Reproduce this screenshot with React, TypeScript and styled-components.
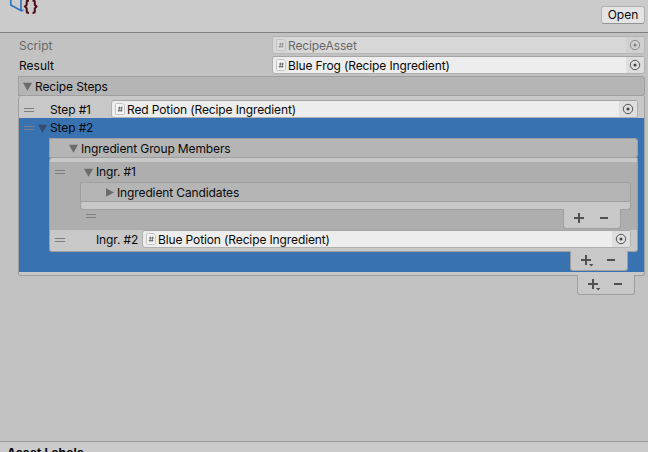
import React from "react";
import styled, { createGlobalStyle } from "styled-components";

const Global = createGlobalStyle`
  * { box-sizing: border-box; }
  body { margin: 0; overflow: hidden; background: #c2c2c2; }
`;

const Inspector = styled.main`
  width: 648px;
  height: 452px;
  overflow: hidden;
  display: flex;
  flex-direction: column;
  background: #c2c2c2;
  color: #090909;
  font: 12px/18px Inter, sans-serif;
  letter-spacing: -0.12px;
  white-space: nowrap;
`;

const Header = styled.header`
  height: 33px;
  flex: none;
  display: flex;
  justify-content: space-between;
  padding: 0 3px 0 8px;
  background: #cbcbcb;
  border-bottom: 1px solid #808080;
`;

const OpenButton = styled.button`
  width: 44px;
  height: 18px;
  margin-top: 6px;
  padding: 0;
  background: #e4e4e4;
  border: 1px solid #b0b0b0;
  border-bottom-color: #939393;
  border-radius: 3px;
  color: #090909;
  font: 12px/16px Inter, sans-serif;
`;

const Body = styled.section`
  flex: 1;
  padding: 3px 3px 0 18px;
`;

const Property = styled.div<{ $disabled?: boolean }>`
  display: flex;
  height: 18px;
  margin-bottom: 2px;
  opacity: ${(p) => (p.$disabled ? 0.5 : 1)};
`;

const PropertyLabel = styled.span`
  width: 254px;
  padding: 1px 0 0 1px;
  letter-spacing: 0;
`;

const Field = styled.div`
  flex: 1;
  height: 18px;
  display: flex;
  align-items: center;
  padding-left: 3px;
  background: #ededed;
  border: 1px solid #b0b0b0;
  border-top-color: #a4a4a4;
  border-radius: 3px;
  overflow: hidden;
`;

const FieldText = styled.span`
  flex: 1;
  margin-left: 1px;
  line-height: 16px;
  padding-top: 1px;
`;

const Picker = styled.span`
  width: 18px;
  height: 16px;
  display: grid;
  place-items: center;
  background: #dedede;
`;

const Foldout = styled.div<{ $indent: number }>`
  height: 20px;
  display: flex;
  align-items: center;
  padding-left: ${(p) => p.$indent}px;
  background: #b5b5b5;
  border: 1px solid #9f9f9f;
  border-radius: 0 3px 3px 0;
`;

const FoldoutText = styled.span`
  padding-top: 2px;
`;

const List = styled.div<{ $height: number; $pad: number }>`
  height: ${(p) => p.$height}px;
  padding-top: ${(p) => p.$pad}px;
  background: #c8c8c8;
  border: 1px solid #9f9f9f;
  border-top: 0;
  border-radius: 3px 0 3px 3px;
`;

const Row = styled.div<{ $height: number }>`
  height: ${(p) => p.$height}px;
  display: flex;
  padding: 0 6px 0 5px;
`;

const RowLabel = styled.span<{ $width: number; $indent: number }>`
  width: ${(p) => p.$width}px;
  padding: 1px 0 0 ${(p) => p.$indent}px;
`;

const Selected = styled.div`
  height: 154px;
  padding: 0 6px 0 30px;
  background: #3872b1;
`;

const ElementTitle = styled.div<{ $gap: number }>`
  height: 20px;
  display: flex;
  align-items: center;
  margin-left: -25px;

  & > svg { margin-left: ${(p) => p.$gap}px; }
`;

const Element = styled.div`
  height: 68px;
  padding: 0 6px 0 30px;
  background: #aeaeae;
`;

const Grip = styled.span<{ $top?: number; $left?: number }>`
  width: 10px;
  height: 4px;
  flex: none;
  margin: ${(p) => p.$top ?? 0}px 0 0 ${(p) => p.$left ?? 0}px;
  border: solid #808080;
  border-width: 1px 0;
`;

const ListEnd = styled.div<{ $grip?: boolean }>`
  display: flex;
  justify-content: ${(p) => (p.$grip ? "space-between" : "flex-end")};
  margin-top: -1px;
  padding-right: 10px;
`;

const FooterTab = styled.div`
  width: 58px;
  height: 20px;
  background: #c8c8c8;
  border: 1px solid #9f9f9f;
  border-top: 0;
  border-radius: 0 0 3px 3px;
`;

const AssetLabels = styled.footer`
  height: 11px;
  flex: none;
  padding: 2px 0 0 7px;
  background: #cbcbcb;
  border-top: 1px solid #999;
  font-weight: 700;
  letter-spacing: 0.14px;
`;

const ArrowSvg = styled.svg`
  flex: none;
  margin-right: 3px;
`;

const Arrow = ({ closed, fill = "#6b6b6b" }: { closed?: boolean; fill?: string }) => (
  <ArrowSvg width="9" height="9" viewBox="0 0 9 9">
    <path d={closed ? "M1 .2 9 4.5 1 8.8z" : "M0 .8h9L4.5 8.8z"} fill={fill} />
  </ArrowSvg>
);

const ScriptIcon = () => (
  <svg width="11" height="12" viewBox="0 0 11 12">
    <path d="M1.5.5h6l2 2v8a1 1 0 0 1-1 1h-7a1 1 0 0 1-1-1v-9a1 1 0 0 1 1-1z" fill="#f4f4f4" stroke="#c4c4c4" />
    <path d="M4.6 3.5 3.8 9M6.8 3.5 6 9M3 5h4.8M2.7 7.4h4.8" fill="none" stroke="#555" strokeWidth=".75" />
  </svg>
);

const ObjectField = ({ value }: { value: string }) => (
  <Field>
    <ScriptIcon />
    <FieldText>{value}</FieldText>
    <Picker>
      <svg width="12" height="12" viewBox="0 0 12 12">
        <circle cx="6" cy="6" r="4.7" fill="none" stroke="#555" />
        <circle cx="6" cy="6" r="1.5" fill="#444" />
      </svg>
    </Picker>
  </Field>
);

const ListButtons = ({ menu }: { menu?: boolean }) => (
  <FooterTab>
    <svg width="56" height="19" viewBox="0 0 56 19">
      <path d="M10 9h10M15 4v10M36 9h8" stroke="#505050" strokeWidth="2" fill="none" />
      {menu && <path d="M18 13h4.4l-2.2 2.4z" fill="#505050" />}
    </svg>
  </FooterTab>
);

const AssetIcon = () => (
  <svg width="32" height="16" viewBox="0 0 32 16">
    <path d="M2.8 0v5l5 2.8 5.2 2.7V0M13 10.3h2.4" fill="none" stroke="#3276be" strokeWidth="1.7" />
    <path d="M21 .8h-1.3q-1 0-1 1v3L17 6.6l1.7 1.8v3.2q0 1.2 1 1.2H21M24.5.8h1.3q1 0 1 1v3l1.7 1.8-1.7 1.8v3.2q0 1.2-1 1.2h-1.3" fill="none" stroke="#4c0c14" strokeWidth="2" />
  </svg>
);

export default function App() {
  return (
    <>
      <Global />
      <Inspector>
        <Header>
          <AssetIcon />
          <OpenButton>Open</OpenButton>
        </Header>
        <Body>
          <Property $disabled>
            <PropertyLabel>Script</PropertyLabel>
            <ObjectField value="RecipeAsset" />
          </Property>
          <Property>
            <PropertyLabel>Result</PropertyLabel>
            <ObjectField value="Blue Frog (Recipe Ingredient)" />
          </Property>
          <Foldout $indent={4}>
            <Arrow />
            <FoldoutText>Recipe Steps</FoldoutText>
          </Foldout>
          <List $height={180} $pad={4}>
            <Row $height={18}>
              <Grip $top={8} />
              <RowLabel $width={77} $indent={16}>Step #1</RowLabel>
              <ObjectField value="Red Potion (Recipe Ingredient)" />
            </Row>
            <Selected>
              <ElementTitle $gap={4}>
                <Grip />
                <Arrow fill="#354c70" />
                Step #2
              </ElementTitle>
              <Foldout $indent={19}>
                <Arrow />
                <FoldoutText>Ingredient Group Members</FoldoutText>
              </Foldout>
              <List $height={94} $pad={4}>
                <Element>
                  <ElementTitle $gap={19}>
                    <Grip />
                    <Arrow />
                    Ingr. #1
                  </ElementTitle>
                  <Foldout $indent={24}>
                    <Arrow closed />
                    <FoldoutText>Ingredient Candidates</FoldoutText>
                  </Foldout>
                  <List $height={8} $pad={0} />
                  <ListEnd $grip>
                    <Grip $top={5} $left={6} />
                    <ListButtons />
                  </ListEnd>
                </Element>
                <Row $height={18}>
                  <Grip $top={8} />
                  <RowLabel $width={77} $indent={31}>Ingr. #2</RowLabel>
                  <ObjectField value="Blue Potion (Recipe Ingredient)" />
                </Row>
              </List>
              <ListEnd>
                <ListButtons menu />
              </ListEnd>
            </Selected>
          </List>
          <ListEnd>
            <ListButtons menu />
          </ListEnd>
        </Body>
        <AssetLabels>Asset Labels</AssetLabels>
      </Inspector>
    </>
  );
}
